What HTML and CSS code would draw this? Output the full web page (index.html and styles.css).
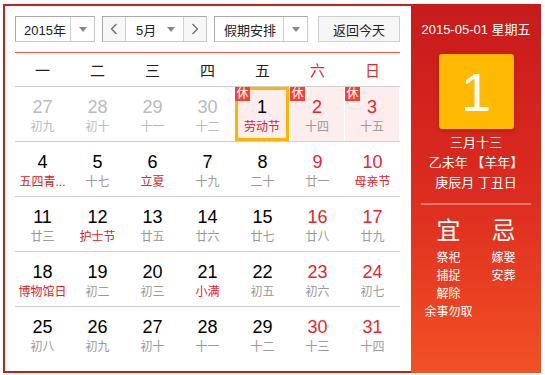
FILE: index.html
```html
<!DOCTYPE html>
<html lang="zh-CN">
<head>
<meta charset="utf-8">
<title>万年历</title>
<link rel="stylesheet" href="styles.css">
</head>
<body>
<div class="calendar">
  <div class="main">
    <div class="controls">
      <div class="select year-select">
        <span class="select-text">2015年</span>
        <span class="select-arrow"><i class="tri"></i></span>
      </div>
      <div class="month-group">
        <span class="nav-btn"><svg width="8" height="12" viewBox="0 0 8 12"><polyline points="6.5,1 1.5,6 6.5,11" fill="none" stroke="#666" stroke-width="1.2"/></svg></span>
        <span class="month-select"><span class="month-text">5月</span><i class="tri"></i></span>
        <span class="nav-btn"><svg width="8" height="12" viewBox="0 0 8 12"><polyline points="1.5,1 6.5,6 1.5,11" fill="none" stroke="#666" stroke-width="1.2"/></svg></span>
      </div>
      <div class="select holiday-select">
        <span class="select-text">假期安排</span>
        <span class="select-arrow"><i class="tri"></i></span>
      </div>
      <div class="today-btn">返回今天</div>
    </div>

    <div class="week-head">
      <span>一</span><span>二</span><span>三</span><span>四</span><span>五</span><span class="red">六</span><span class="red">日</span>
    </div>

    <div class="week">
      <div class="day other"><b>27</b><em>初九</em></div>
      <div class="day other"><b>28</b><em>初十</em></div>
      <div class="day other"><b>29</b><em>十一</em></div>
      <div class="day other"><b>30</b><em>十二</em></div>
      <div class="day holiday selected"><span class="rest">休</span><b>1</b><em class="fest">劳动节</em></div>
      <div class="day holiday weekend"><span class="rest">休</span><b>2</b><em>十四</em></div>
      <div class="day holiday weekend"><span class="rest">休</span><b>3</b><em>十五</em></div>
    </div>
    <div class="week">
      <div class="day"><b>4</b><em class="fest">五四青...</em></div>
      <div class="day"><b>5</b><em>十七</em></div>
      <div class="day"><b>6</b><em class="fest">立夏</em></div>
      <div class="day"><b>7</b><em>十九</em></div>
      <div class="day"><b>8</b><em>二十</em></div>
      <div class="day weekend"><b>9</b><em>廿一</em></div>
      <div class="day weekend"><b>10</b><em class="fest">母亲节</em></div>
    </div>
    <div class="week">
      <div class="day"><b>11</b><em>廿三</em></div>
      <div class="day"><b>12</b><em class="fest">护士节</em></div>
      <div class="day"><b>13</b><em>廿五</em></div>
      <div class="day"><b>14</b><em>廿六</em></div>
      <div class="day"><b>15</b><em>廿七</em></div>
      <div class="day weekend"><b>16</b><em>廿八</em></div>
      <div class="day weekend"><b>17</b><em>廿九</em></div>
    </div>
    <div class="week">
      <div class="day"><b>18</b><em class="fest">博物馆日</em></div>
      <div class="day"><b>19</b><em>初二</em></div>
      <div class="day"><b>20</b><em>初三</em></div>
      <div class="day"><b>21</b><em class="fest">小满</em></div>
      <div class="day"><b>22</b><em>初五</em></div>
      <div class="day weekend"><b>23</b><em>初六</em></div>
      <div class="day weekend"><b>24</b><em>初七</em></div>
    </div>
    <div class="week last">
      <div class="day"><b>25</b><em>初八</em></div>
      <div class="day"><b>26</b><em>初九</em></div>
      <div class="day"><b>27</b><em>初十</em></div>
      <div class="day"><b>28</b><em>十一</em></div>
      <div class="day"><b>29</b><em>十二</em></div>
      <div class="day weekend"><b>30</b><em>十三</em></div>
      <div class="day weekend"><b>31</b><em>十四</em></div>
    </div>
  </div>

  <div class="side">
    <div class="side-date">2015-05-01 星期五</div>
    <div class="big-day">1</div>
    <div class="lunar">
      <div>三月十三</div>
      <div>乙未年 【羊年】</div>
      <div>庚辰月 丁丑日</div>
    </div>
    <div class="sep"></div>
    <div class="yiji">
      <div class="yj-col">
        <div class="yj-title">宜</div>
        <div>祭祀</div>
        <div>捕捉</div>
        <div>解除</div>
        <div>余事勿取</div>
      </div>
      <div class="yj-col">
        <div class="yj-title">忌</div>
        <div>嫁娶</div>
        <div>安葬</div>
      </div>
    </div>
  </div>
</div>
</body>
</html>
```

FILE: styles.css
```css
* { box-sizing: border-box; }
html, body { margin: 0; padding: 0; background: #fff; }
body {
  font-family: "Liberation Sans", "Noto Sans CJK SC", sans-serif;
  color: #333;
}
.calendar {
  margin: 4px 0 0 3px;
  width: 538px;
  height: 369px;
  border: 2px solid #c81e1b;
  display: flex;
}
.main {
  width: 406px;
  padding: 10px 11px 0 10px;
}
.controls {
  display: flex;
  height: 26px;
  font-size: 13px;
}
.select {
  display: flex;
  height: 26px;
  border: 1px solid #c8c8c8;
  border-top-color: #a9a9a9;
  border-left-color: #a9a9a9;
  background: #fff;
}
.select-text {
  flex: 1;
  display: flex;
  align-items: center;
  justify-content: center;
  color: #222;
}
.select-arrow {
  width: 24px;
  border-left: 1px solid #d0d0d0;
  display: flex;
  align-items: center;
  justify-content: center;
}
.tri {
  display: block;
  width: 0;
  height: 0;
  border-top: 5px solid #888;
  border-left: 4px solid transparent;
  border-right: 4px solid transparent;
}
.year-select { width: 80px; }
.year-select .select-text { padding-left: 4px; }
.month-group {
  margin-left: 7px;
  width: 105px;
  display: flex;
  border: 1px solid #c8c8c8;
  border-top-color: #a9a9a9;
  border-left-color: #a9a9a9;
}
.nav-btn {
  width: 22px;
  display: flex;
  align-items: center;
  justify-content: center;
  background: #f7f7f7;
}
.month-select {
  flex: 1;
  display: flex;
  align-items: center;
  border-left: 1px solid #d0d0d0;
  border-right: 1px solid #d0d0d0;
  padding: 0 8px 0 10px;
  background: #fff;
}
.month-text { flex: 1; color: #222; }
.holiday-select { margin-left: 7px; width: 94px; }
.holiday-select .select-text { padding-left: 2px; letter-spacing: 0; }
.today-btn {
  margin-left: 10px;
  width: 82px;
  height: 26px;
  border: 1px solid #cfcfcf;
  background: #f6f6f6;
  display: flex;
  align-items: center;
  justify-content: center;
  color: #222;
}
.week-head {
  margin-top: 10px;
  border-top: 1px solid #f45a52;
  border-bottom: 1px solid #cfcfcf;
  height: 35px;
  display: grid;
  grid-template-columns: repeat(7, 55px);
  align-items: center;
  justify-items: center;
  font-size: 15px;
  color: #222;
}
.week-head .red { color: #e5262c; }
.week {
  display: grid;
  grid-template-columns: repeat(7, 55px);
  height: 55px;
  border-bottom: 1px solid #cfcfcf;
}
.week.last { border-bottom: none; }
.day {
  position: relative;
  display: flex;
  flex-direction: column;
  align-items: center;
  padding-top: 9px;
}
.day b {
  font-weight: normal;
  font-size: 18px;
  line-height: 22px;
  color: #000;
}
.day em {
  font-style: normal;
  font-size: 12px;
  line-height: 18px;
  color: #999;
  white-space: nowrap;
}
.day em.fest { color: #e0201f; }
.day.weekend b { color: #e5262c; }
.day.other b, .day.other em { color: #bbb; }
.day.holiday {
  background: #fdeded;
  border-right: 1px solid #fff;
}
.day.selected {
  box-shadow: inset 0 0 0 3px #ffb400;
}
.rest {
  position: absolute;
  left: 0;
  top: 0;
  width: 15px;
  height: 14px;
  background: #f5413a;
  color: #fff;
  font-size: 12px;
  line-height: 14px;
  text-align: center;
}
.side {
  width: 130px;
  margin: -2px -2px -2px 0;
  background: linear-gradient(180deg, #c71b1b 0%, #dc2b1f 50%, #f25124 100%);
  color: #fff;
  display: flex;
  flex-direction: column;
  align-items: center;
  padding-top: 16px;
}
.side-date {
  font-size: 13px;
  line-height: 20px;
}
.big-day {
  margin-top: 14px;
  width: 75px;
  height: 75px;
  border-radius: 3px;
  background: #ffb900;
  box-shadow: 0 2px 4px rgba(120, 20, 10, 0.35);
  display: flex;
  align-items: center;
  justify-content: center;
  font-size: 54px;
  line-height: 1;
  color: #fff;
}
.lunar {
  margin-top: 4px;
  font-size: 13px;
  line-height: 20px;
  text-align: center;
}
.sep {
  margin-top: 10px;
  width: 110px;
  height: 2px;
  background: rgba(255, 255, 255, 0.35);
}
.yiji {
  margin-top: 11px;
  display: grid;
  grid-template-columns: 55px 55px;
  font-size: 12px;
  line-height: 18px;
  text-align: center;
}
.yj-title {
  font-size: 24px;
  line-height: 30px;
  margin-bottom: 3px;
}
```
